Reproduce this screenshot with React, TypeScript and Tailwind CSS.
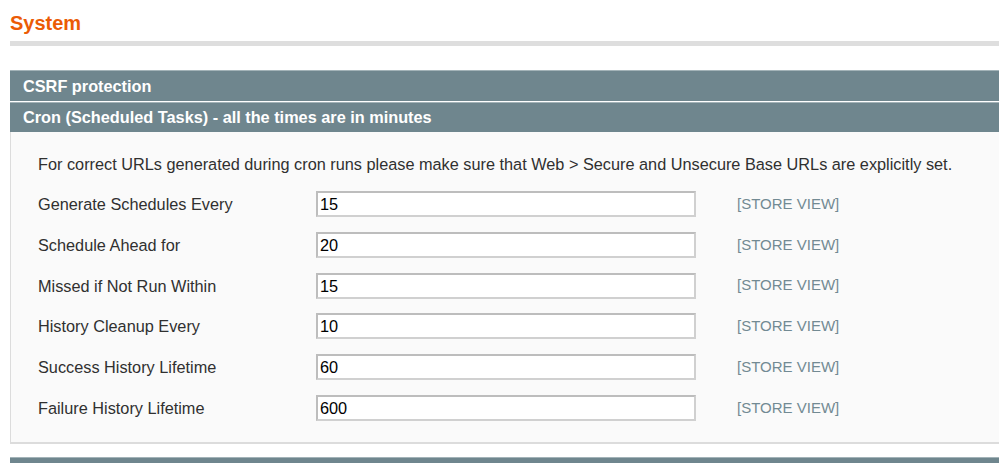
import React from "react";

const rows = [
  ["Generate Schedules Every", "15"],
  ["Schedule Ahead for", "20"],
  ["Missed if Not Run Within", "15"],
  ["History Cleanup Every", "10"],
  ["Success History Lifetime", "60"],
  ["Failure History Lifetime", "600"],
];

export default function App() {
  return (
    <div
      className="w-[999px] h-[463px] overflow-hidden bg-white"
      style={{ fontFamily: '"Liberation Sans", Arial, sans-serif' }}
    >
      <div className="pl-[10px] w-[1040px]">
        <h1 className="text-[20px] leading-[24px] font-bold text-[#eb5b05] pt-[11px]">System</h1>
        <div className="mt-[6px] h-[5px] bg-[#dedede]" />
        <div className="mt-[24px] h-[31px] bg-[#6f868e] border-t border-[#a3b3b8] flex items-center pl-[13px] text-white font-bold text-[16.3px]">
          CSRF protection
        </div>
        <div className="mt-[1px] h-[30px] bg-[#6f868e] border-t border-[#a3b3b8] flex items-center pl-[13px] text-white font-bold text-[16.3px]">
          Cron (Scheduled Tasks) - all the times are in minutes
        </div>
        <div className="bg-[#fafafa] border-l border-b-2 border-[#dcdcdc] pt-[22px] pb-[14px] pl-[27px]">
          <div className="h-[20px] leading-[20px] text-[16.3px] text-[#303030]">
            For correct URLs generated during cron runs please make sure that Web &gt; Secure and Unsecure Base URLs are explicitly set.
          </div>
          <div className="mt-[10px]">
            {rows.map(([label, value]) => (
              <div key={label} className="h-[40.7px] flex items-center">
                <div className="w-[278px] text-[16.3px] text-[#303030]">{label}</div>
                <div className="w-[380px] h-[26px] bg-white border-2 border-t-[#bdbdbd] border-l-[#bdbdbd] border-r-[#d0d0d0] border-b-[#d0d0d0] flex items-center pl-[2px] text-[16.3px] text-black">
                  {value}
                </div>
                <div className="ml-[41px] text-[15px] text-[#728a93]">[STORE VIEW]</div>
              </div>
            ))}
          </div>
        </div>
        <div className="mt-[13px] h-[10px] bg-[#6f868e] border-t border-[#a3b3b8]" />
      </div>
    </div>
  );
}
